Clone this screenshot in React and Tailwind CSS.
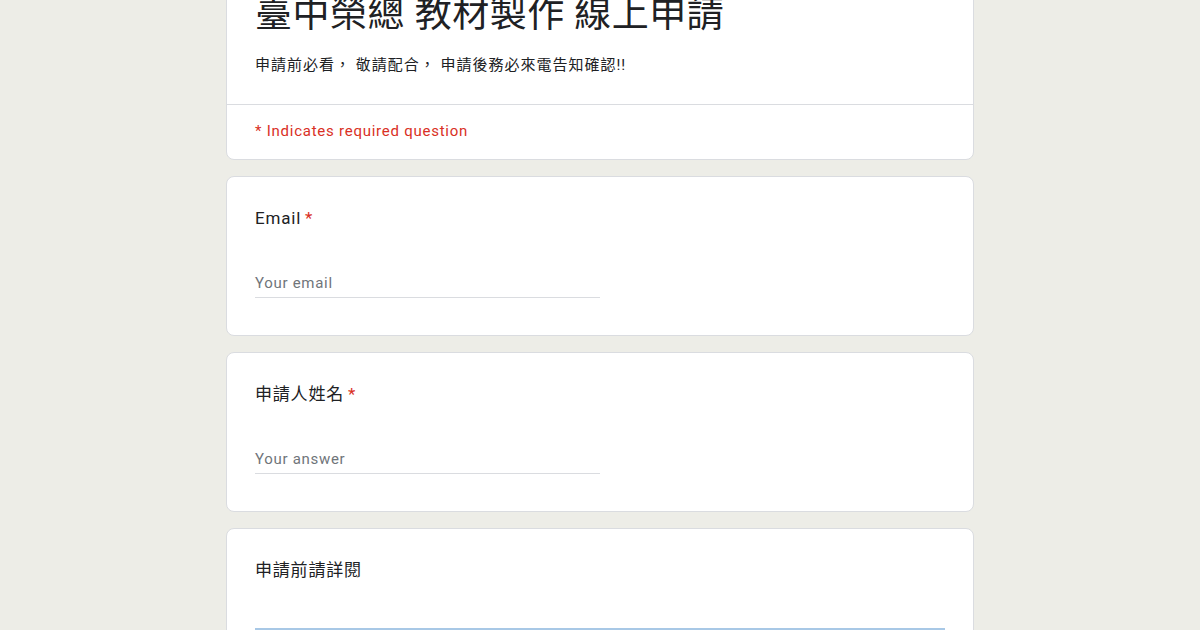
import React from "react";

const font = { fontFamily: 'Roboto, "Noto Sans CJK TC", "Noto Sans", sans-serif' };

function Card({ children, className = "" }) {
  return (
    <div className={"w-[748px] mx-auto bg-white border border-[#dadce0] rounded-lg " + className}>
      {children}
    </div>
  );
}

function Question({ label, required, placeholder }) {
  return (
    <Card className="px-7 pt-[29px] pb-[37px]">
      <div className="text-[17px] leading-6 text-[#202124] tracking-[0.8px]">
        {label}
        {required && <span className="text-[#d93025] ml-[4px]">*</span>}
      </div>
      <div className="mt-[43px] w-1/2 border-b border-[#dadce0] pb-[4px]">
        <div className="text-[15px] leading-5 text-[#70757a] tracking-[0.7px]">{placeholder}</div>
      </div>
    </Card>
  );
}

export default function App() {
  return (
    <div className="min-h-[630px] bg-[#edede7] overflow-hidden" style={font}>
      <div className="-mt-[22px] flex flex-col gap-4">
        <Card>
          <div className="px-7 pt-[12px] pb-[29px]">
            <div className="text-[37px] leading-[48px] text-[#202124] tracking-[0.5px]">
              臺中榮總 教材製作 線上申請
            </div>
            <div className="mt-[16px] text-[15px] leading-5 text-[#202124] tracking-[1px]">
              申請前必看， 敬請配合， 申請後務必來電告知確認!!
            </div>
          </div>
          <div className="border-t border-[#dadce0] px-7 pt-[16px] pb-[18px]">
            <div className="text-[15px] leading-5 text-[#d93025] tracking-[0.75px]">* Indicates required question</div>
          </div>
        </Card>
        <Question label="Email" required placeholder="Your email" />
        <Question label="申請人姓名" required placeholder="Your answer" />
        <Card className="px-7 pt-[29px] pb-[40px]">
          <div className="text-[17px] leading-6 text-[#202124] tracking-[0.8px]">申請前請詳閱</div>
          <div className="mt-[46px] h-[200px] bg-[#a8c8e6]"></div>
        </Card>
      </div>
    </div>
  );
}
